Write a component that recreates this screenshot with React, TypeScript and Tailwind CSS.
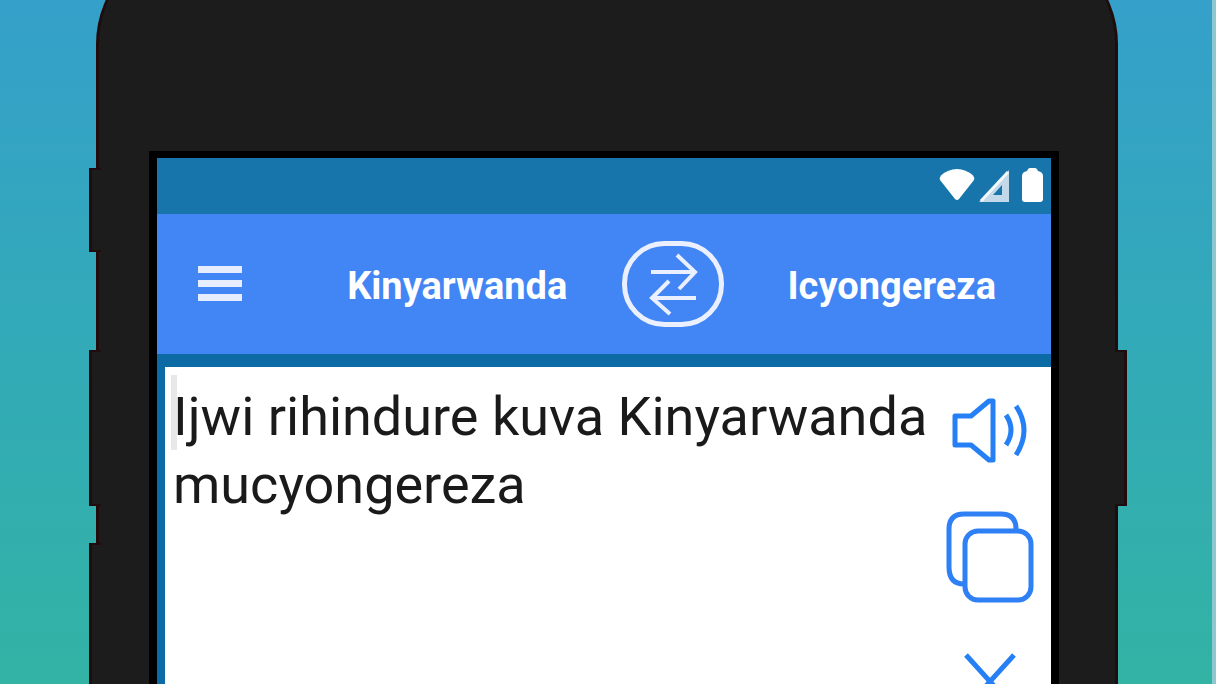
import { useState } from 'react';

function WifiIcon() {
  return (
    <svg className="h-9 w-9" viewBox="0 0 36 36" fill="white" aria-hidden="true">
      <path d="M16 31 L1 12 Q0 10 2 7.500 Q9 1 18 1 Q27 1 34 7.500 Q36 10 35 12 L20 31 Q18 33 16 31 Z" />
    </svg>
  );
}

function SignalIcon() {
  return (
    <svg className="h-9 w-8" viewBox="0 0 32 36" fill="none" aria-hidden="true">
      <path d="M30 2 V34 H0 Z M23 17 L14 27 H23 Z" fill="#c3d9ea" fillRule="evenodd" />
      <path d="M2 33 L29 4" stroke="#f2f7fb" strokeWidth="3" />
    </svg>
  );
}

function BatteryIcon() {
  return (
    <svg className="h-9 w-6" viewBox="0 0 24 36" fill="white" aria-hidden="true">
      <path d="M9 0 H14 Q16 0 17 3 Q22 4 22 8 V31 Q22 34 19 34 H4 Q1 34 1 31 V8 Q1 4 6 3 Q7 0 9 0 Z" />
    </svg>
  );
}

function MenuIcon() {
  return (
    <svg className="h-9 w-[46px]" viewBox="0 0 46 36" fill="#e6edff" aria-hidden="true">
      <rect x="1" y="0" width="44" height="7" />
      <rect x="1" y="14" width="44" height="7" />
      <rect x="1" y="28" width="44" height="7" />
    </svg>
  );
}

function SwapIcon() {
  return (
    <svg className="h-[86px] w-[102px]" viewBox="0 0 102 86" fill="none" stroke="#eaf0ff" aria-hidden="true">
      <rect x="2.500" y="2.500" width="97" height="81" rx="40" strokeWidth="5" />
      <path d="M29 31 H73 M55 14 L73 31 L57 48" strokeWidth="4" />
      <path d="M74 57 H30 M47 40 L30 57 L48 73" strokeWidth="4" />
    </svg>
  );
}

function SpeakerIcon() {
  return (
    <svg className="h-[68px] w-20" viewBox="0 0 80 68" fill="none" stroke="#2680f5" strokeWidth="5" strokeLinejoin="round" aria-hidden="true">
      <path d="M5 21 H21 L39 6 H43 V65 H39 L21 50 H5 Z" />
      <path d="M56 20 Q66 35 56 50" />
      <path d="M66 11 Q82 35 66 60" />
    </svg>
  );
}

function CopyIcon() {
  return (
    <svg className="h-[92px] w-[88px]" viewBox="0 0 88 92" fill="none" stroke="#2f80f5" strokeWidth="5" aria-hidden="true">
      <path d="M18 73 Q3 73 3 56 V18 Q3 3 18 3 H55 Q70 3 70 18" />
      <rect x="19" y="20" width="66" height="69" rx="13" />
    </svg>
  );
}

function ClearIcon() {
  return (
    <svg className="h-[60px] w-[52px]" viewBox="0 0 52 60" fill="none" stroke="#2680f5" strokeWidth="5" aria-hidden="true">
      <path d="M2 4 L50 57 M50 4 L2 57" />
    </svg>
  );
}

const LANGUAGES = ['Kinyarwanda', 'Icyongereza'];

export default function App() {
  const [languages, setLanguages] = useState(LANGUAGES);
  const [text, setText] = useState('Ijwi rihindure kuva Kinyarwanda mucyongereza');

  return (
    <div className="h-screen overflow-hidden border-r-4 border-[#8cc8cf] bg-linear-to-b from-[#35a0ca] to-[#32b3a4] pr-[94px] pl-24 font-['Roboto',sans-serif]">
      {/* phone body */}
      <div className="relative -mt-15 flex h-[900px] flex-col rounded-t-[104px] border-x-3 border-[#200c0c] bg-[#1c1c1c] pt-[211px] pr-14 pl-[50px]">
        {/* side keys */}
        <div className="absolute top-[228px] -left-[10px] h-[84px] w-3 border-y-2 border-l-3 border-[#200c0c] bg-[#1c1c1c]" />
        <div className="absolute top-[410px] -left-[10px] h-[156px] w-3 border-y-2 border-l-3 border-[#200c0c] bg-[#1c1c1c]" />
        <div className="absolute top-[603px] -left-[10px] h-[156px] w-3 border-y-2 border-l-3 border-[#200c0c] bg-[#1c1c1c]" />
        <div className="absolute top-[410px] -right-[12px] h-[156px] w-3 border-y-2 border-r-3 border-[#200c0c] bg-[#1c1c1c]" />

        <div className="flex flex-1 flex-col border-8 border-b-0 border-t-7 border-black">
          <div className="flex h-14 items-center justify-end gap-1 bg-[#1775ab] pr-1.5">
            <WifiIcon />
            <SignalIcon />
            <span className="ml-1.5">
              <BatteryIcon />
            </span>
          </div>

          <header className="grid h-[140px] grid-cols-[135px_331fr_102px_327fr] items-center bg-[#4285f5] text-[38px] font-bold text-white">
            <button aria-label="Menu" className="pl-10">
              <MenuIcon />
            </button>
            <button className="pt-1">{languages[0]}</button>
            <button aria-label="Swap languages" onClick={() => setLanguages([languages[1], languages[0]])}>
              <SwapIcon />
            </button>
            <button className="pt-1 pl-2">{languages[1]}</button>
          </header>

          <main className="flex flex-1 border-t-13 border-l-8 border-[#0c6ba4] bg-white">
            <div className="relative flex-1">
              <div className="absolute top-2 left-1.5 h-[75px] w-1.5 bg-[#e8e8e8]" />
              <textarea
                aria-label="Text to translate"
                value={text}
                onChange={e => setText(e.target.value)}
                className="relative h-full w-full resize-none overflow-hidden pt-4 pl-2 text-[54px] leading-[68px] text-[#1a1a1a] outline-none"
              />
            </div>
            <div className="flex w-[122px] flex-col items-center pt-7">
              <button aria-label="Listen">
                <SpeakerIcon />
              </button>
              <button aria-label="Copy" className="mt-12">
                <CopyIcon />
              </button>
              <button aria-label="Clear" className="mt-12">
                <ClearIcon />
              </button>
            </div>
          </main>
        </div>
      </div>
    </div>
  );
}
